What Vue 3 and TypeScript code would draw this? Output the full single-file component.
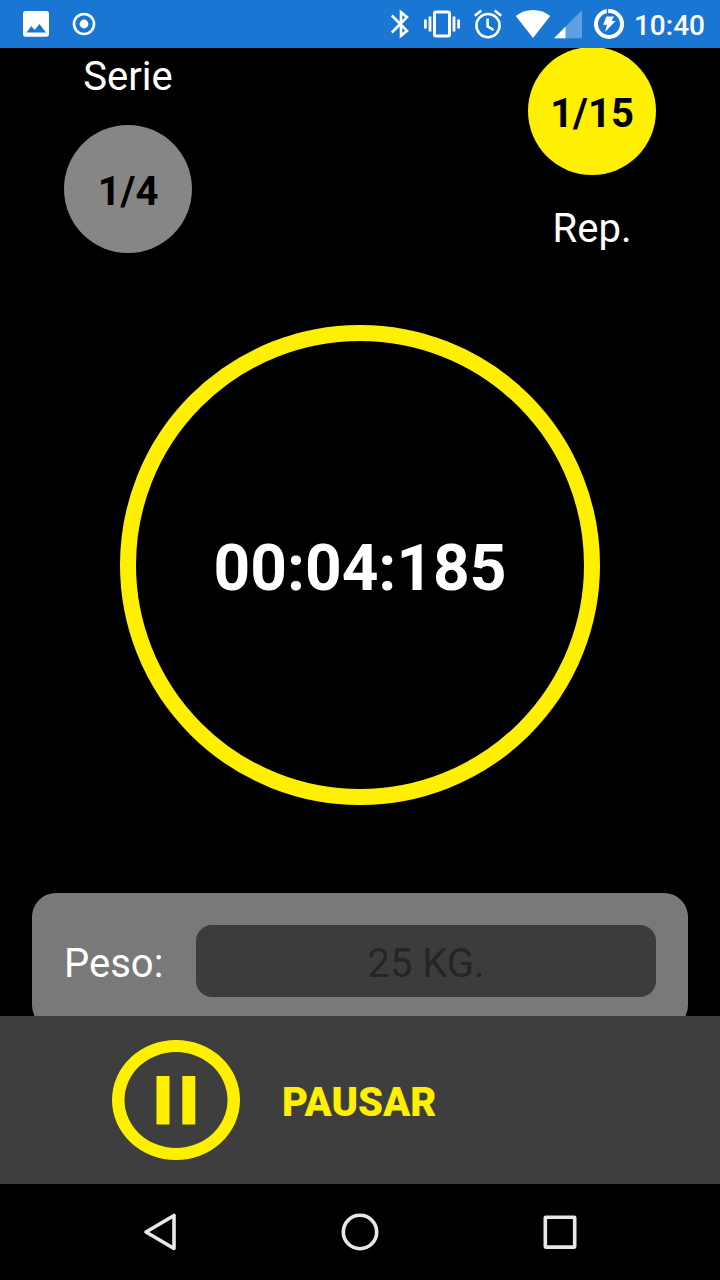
<script setup lang="ts">
import { ref } from 'vue'

interface Progress {
  current: number
  total: number
}

const series: Progress = { current: 1, total: 4 }
const reps: Progress = { current: 1, total: 15 }
const elapsed = ref('00:04:185')
const weight = ref('25 KG.')
const clock = '10:40'
</script>

<template>
  <div class="screen">
    <header class="status">
      <div class="notifications">
        <svg width="48" height="48" viewBox="0 0 48 48" aria-hidden="true">
          <path
            fill="#fff"
            fill-rule="evenodd"
            d="M13.500 11h21q2.500 0 2.500 2.500v20.500q0 2.800-2.500 2.800h-21q-2.500 0-2.500-2.800v-20.500q0-2.500 2.500-2.500ZM14.500 32.500h19.500l-6.600-8.600-4.700 6-3.400-4Z"
          />
        </svg>
        <svg width="48" height="48" viewBox="0 0 48 48" aria-hidden="true">
          <circle cx="24" cy="24" r="10" fill="none" stroke="#fff" stroke-width="2.600" />
          <circle cx="24" cy="24" r="4.400" fill="#fff" />
        </svg>
      </div>
      <div class="system">
        <svg width="24" height="48" viewBox="388 0 24 48" aria-hidden="true">
          <path
            fill="none"
            stroke="#fff"
            stroke-width="2.600"
            d="M391.800 15.500l15.200 15.300-6 5V12.200l6 5-15.200 15.300"
          />
        </svg>
        <svg width="40" height="48" viewBox="422 0 40 48" aria-hidden="true">
          <rect x="434.500" y="12" width="15" height="24" rx="1.500" fill="none" stroke="#fff" stroke-width="3" />
          <path stroke="#fff" stroke-width="2.800" d="M425.400 19.500v9M430 16.500v15M454 16.500v15M458.600 19.500v9" />
        </svg>
        <svg width="32" height="48" viewBox="472 0 32 48" aria-hidden="true">
          <g fill="none" stroke="#fff" stroke-width="2.600">
            <circle cx="488" cy="25.600" r="11.600" />
            <path d="M474.800 15.800l6.600-5.400M501.200 15.800l-6.600-5.400M487.600 18.400v8l6 3.600" />
          </g>
        </svg>
        <svg width="70" height="48" viewBox="514 0 70 48" aria-hidden="true">
          <path fill="#fff" d="M533 38L515.800 16Q523 10 533 10T550.200 16Z" />
          <path fill="#fff" fill-opacity="0.300" d="M554 38.300L582 10v28.300Z" />
          <path fill="#fff" d="M554 38.300L565.500 26.700v11.600Z" />
        </svg>
        <svg width="30" height="48" viewBox="594 0 30 48" aria-hidden="true">
          <circle cx="609" cy="24" r="13" fill="none" stroke="#fff" stroke-width="4" />
          <path stroke="#1976d2" stroke-width="1.400" d="M607.500 9v5" />
          <path fill="#fff" d="M606.500 16.400h7.500l-2.400 4.600h4L605 32l2-7.200h-4Z" />
        </svg>
        <time class="clock">{{ clock }}</time>
      </div>
    </header>

    <main class="workout">
      <section class="counters">
        <div class="counter series">
          <span class="caption">Serie</span>
          <strong class="badge">{{ series.current }}/{{ series.total }}</strong>
        </div>
        <div class="counter reps">
          <strong class="badge active">{{ reps.current }}/{{ reps.total }}</strong>
          <span class="caption">Rep.</span>
        </div>
      </section>

      <div class="dial" role="timer">{{ elapsed }}</div>

      <form class="panel" @submit.prevent>
        <label class="field-label" for="weight">Peso:</label>
        <input id="weight" v-model="weight" class="field" type="text" />
      </form>
    </main>

    <footer class="actions">
      <button class="pause" type="button">
        <svg width="128" height="120" viewBox="0 0 128 120" aria-hidden="true">
          <path
            fill="#ffef00"
            fill-rule="evenodd"
            d="M64 0a64 60 0 0 1 0 120a64 60 0 0 1 0-120ZM64 12a51.500 48 0 0 0 0 96a51.500 48 0 0 0 0-96Z"
          />
          <path fill="#ffef00" d="M44.500 36h13v48.500h-13ZM70.300 36h13v48.500h-13Z" />
        </svg>
        <span class="pause-text">PAUSAR</span>
      </button>
    </footer>

    <nav class="navbar">
      <button class="nav-button" type="button" aria-label="Atrás">
        <svg width="48" height="48" viewBox="0 0 48 48">
          <path d="M38 7.500v33L10 24Z" />
        </svg>
      </button>
      <button class="nav-button" type="button" aria-label="Inicio">
        <svg width="48" height="48" viewBox="0 0 48 48">
          <circle cx="24" cy="24" r="16.700" />
        </svg>
      </button>
      <button class="nav-button" type="button" aria-label="Recientes">
        <svg width="48" height="48" viewBox="0 0 48 48">
          <rect x="9.300" y="9.300" width="29.400" height="29.800" rx="0.500" />
        </svg>
      </button>
    </nav>
  </div>
</template>

<style>
body {
  margin: 0;
  background: #000;
}
</style>

<style scoped>
.screen {
  display: flex;
  flex-direction: column;
  height: 100vh;
  background: #000;
  color: #fff;
  font-family: Roboto, sans-serif;
  font-size: 40px;
  line-height: 48px;
}

.screen * {
  box-sizing: border-box;
}

svg {
  display: block;
  flex: none;
}

button {
  border: 0;
  background: none;
  color: inherit;
  font: inherit;
  cursor: pointer;
}

.status {
  flex: none;
  display: flex;
  justify-content: space-between;
  height: 48px;
  padding: 0 15px 0 12px;
  background: #1976d2;
}

.notifications,
.system {
  display: flex;
}

.system {
  gap: 10px;
}

.clock {
  padding-top: 2px;
  font-size: 28px;
  font-weight: 500;
}

.workout {
  flex: 1;
  min-height: 0;
  display: flex;
  flex-direction: column;
  overflow: hidden;
}

.counters {
  flex: none;
  display: flex;
  justify-content: space-between;
  margin-top: -1px;
  padding: 0 64px;
}

.counter {
  display: flex;
  flex-direction: column;
  align-items: center;
}

.series {
  justify-content: flex-end;
  gap: 24px;
}

.reps {
  gap: 30px;
}

.badge {
  display: flex;
  align-items: center;
  justify-content: center;
  width: 128px;
  height: 128px;
  padding-top: 6px;
  border-radius: 50%;
  background: #868686;
  color: #000;
  font-weight: 700;
}

.badge.active {
  background: #ffef00;
}

.dial {
  flex: none;
  align-self: center;
  display: flex;
  align-items: center;
  justify-content: center;
  width: 480px;
  height: 480px;
  margin-top: 72px;
  padding-top: 8px;
  border: 16px solid #ffef00;
  border-radius: 50%;
  font-size: 64px;
  font-weight: 700;
}

.panel {
  flex: none;
  display: flex;
  align-items: center;
  gap: 32px;
  margin: 88px 32px 0;
  padding: 32px;
  border-radius: 24px;
  background: #797979;
}

.field-label {
  min-width: 100px;
  padding-top: 6px;
}

.field {
  flex: 1;
  min-width: 0;
  height: 72px;
  margin: 0;
  padding: 4px 16px 0;
  border: 0;
  border-radius: 16px;
  background: #3c3c3c;
  color: #252525;
  font: inherit;
  text-align: center;
}

.actions {
  flex: none;
  background: #3e3e3e;
}

.pause {
  display: flex;
  align-items: center;
  gap: 42px;
  width: 100%;
  padding: 24px 112px;
  color: #ffef00;
  font-weight: 900;
}

.pause-text {
  padding-top: 6px;
}

.navbar {
  flex: none;
  display: flex;
  justify-content: center;
  gap: 152px;
  padding: 24px 0;
}

.nav-button {
  padding: 0;
}

.nav-button svg {
  fill: none;
  stroke: #e8e8e8;
  stroke-width: 3.600;
  stroke-linejoin: round;
}
</style>
